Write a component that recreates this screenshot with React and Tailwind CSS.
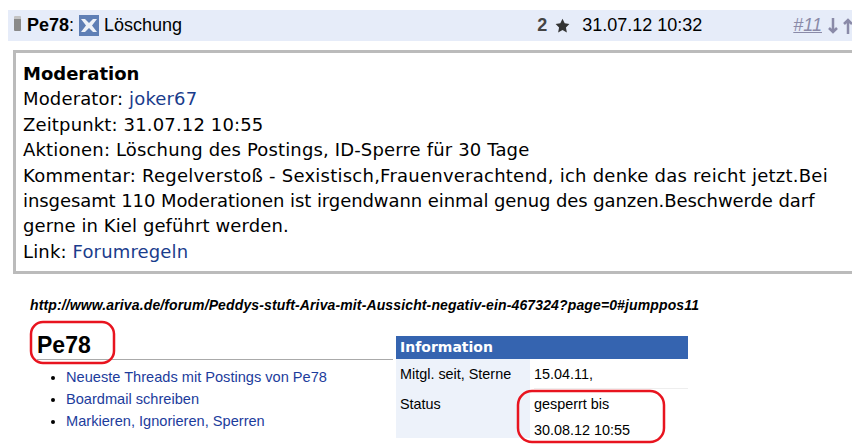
import React from 'react';

const arial = { fontFamily: '"Liberation Sans", Arial, sans-serif' };
const dejavu = { fontFamily: '"DejaVu Sans", Verdana, sans-serif' };

const PhoneIcon = () => (
  <span className="w-[7px] h-[15px] mb-[4px] shrink-0 bg-[#8a8a8a] border-t-[3px] border-[#c4c4c4] rounded-[1px] mr-[6px]" />
);

const CrossIcon = () => (
  <svg width="20" height="21" viewBox="0 0 20 21" className="mx-[5px] shrink-0">
    <rect width="20" height="21" fill="#5f7fb5" />
    <path d="M2 4 L6 4 L10 8 L14 4 L18 4 L13 10.5 L18 17 L14 17 L10 13 L6 17 L2 17 L7 10.5 Z" fill="#eef2f8" />
  </svg>
);

const Star = () => (
  <svg width="15" height="15" viewBox="0 0 24 24" className="ml-[8px] mr-[-1px] shrink-0">
    <path d="M12 1 L15.5 8.5 L23 9.5 L17.5 15 L19 23 L12 19 L5 23 L6.5 15 L1 9.5 L8.5 8.5 Z" fill="#333333" />
  </svg>
);

const Arrow = ({ up }) => (
  <svg width="10" height="16" viewBox="0 0 10 16" fill="none" stroke="#8a8aa8" strokeWidth="2.5" className={up ? 'ml-[5px] shrink-0' : 'ml-[6px] shrink-0'}>
    {up ? <path d="M5 16 V2 M1 6 L5 2 L9 6" /> : <path d="M5 0 V14 M1 10 L5 14 L9 10" />}
  </svg>
);

const Header = () => (
  <div className="ml-2 h-[31px] bg-[#e6ecf9] flex items-center whitespace-nowrap text-[18px] text-black pl-[6px] overflow-hidden" style={arial}>
    <PhoneIcon />
    <span className="font-bold">Pe78</span>
    <span>:</span>
    <CrossIcon />
    <span>Löschung</span>
    <span className="ml-[355px] font-bold text-[#444]">2</span>
    <Star />
    <span className="ml-[13px]">31.07.12 10:32</span>
    <span className="ml-[91px] italic underline text-[#8a8aa8]">#11</span>
    <Arrow />
    <Arrow up />
  </div>
);

const ModerationBox = () => (
  <div
    className="ml-[13px] mt-[9px] h-[224px] border-[3px] border-r-0 border-[#bbbbbb] pl-[7px] pt-[8px] text-[18px] tracking-[0.15px] leading-[25.4px] text-black whitespace-nowrap"
    style={dejavu}
  >
    <div className="font-bold tracking-normal">Moderation</div>
    <div>Moderator: <span className="text-[#1a3c8c]">joker67</span></div>
    <div>Zeitpunkt: 31.07.12 10:55</div>
    <div>Aktionen: Löschung des Postings, ID-Sperre für 30 Tage</div>
    <div className="tracking-[0.24px]">Kommentar: Regelverstoß - Sexistisch,Frauenverachtend, ich denke das reicht jetzt.Bei</div>
    <div className="tracking-[-0.08px]">insgesamt 110 Moderationen ist irgendwann einmal genug des ganzen.Beschwerde darf</div>
    <div className="tracking-[0.1px]">gerne in Kiel geführt werden.</div>
    <div>Link: <span className="text-[#1a3c8c]">Forumregeln</span></div>
  </div>
);

const UserLinks = () => (
  <div className="ml-[37px] w-[356px]">
    <div className="h-[47px] border-b border-[#aaaaaa] pt-[19px] text-[23px] leading-[26px] font-bold text-black">Pe78</div>
    <ul className="list-disc marker:text-black pl-[29px] mt-[6px] text-[14.6px] leading-[22px] text-[#1c3c9c]">
      <li>Neueste Threads mit Postings von Pe78</li>
      <li>Boardmail schreiben</li>
      <li>Markieren, Ignorieren, Sperren</li>
    </ul>
  </div>
);

const InfoTable = () => (
  <div className="ml-[3px] mt-[23px] w-[292px] text-[14.4px] text-black">
    <div className="h-[23px] bg-[#3564b0] text-white font-bold text-[14px] leading-[23px] pl-[4px]" style={dejavu}>Information</div>
    <div className="flex">
      <div className="w-[134px] h-[79px] bg-[#edf2fa] pl-[4px]">
        <div className="h-[30px] leading-[30px]">Mitgl. seit, Sterne</div>
        <div className="h-[49px] leading-[30px]">Status</div>
      </div>
      <div className="flex-1 pl-[4px]">
        <div className="h-[30px] leading-[30px] border-b border-[#eeeeee]">15.04.11,</div>
        <div className="leading-[26px] pt-[2px]">
          <div>gesperrt bis</div>
          <div>30.08.12 10:55</div>
        </div>
      </div>
    </div>
  </div>
);

const Ovals = () => (
  <svg className="absolute left-0 top-0 pointer-events-none" width="852" height="447" fill="none" stroke="#e8141f" strokeWidth="2.5">
    <rect x="31" y="322" width="83" height="41" rx="12" />
    <rect x="518" y="391" width="146" height="51" rx="14" />
  </svg>
);

export default function App() {
  return (
    <div className="relative w-[852px] h-[447px] overflow-hidden bg-white pt-[10px]" style={arial}>
      <Header />
      <ModerationBox />
      <div className="mt-[23px] text-[14px] tracking-[0.13px] leading-[16px] font-bold italic text-black pl-[30px]">
        http://www.ariva.de/forum/Peddys-stuft-Ariva-mit-Aussicht-negativ-ein-467324?page=0#jumppos11
      </div>
      <div className="flex">
        <UserLinks />
        <InfoTable />
      </div>
      <Ovals />
    </div>
  );
}
